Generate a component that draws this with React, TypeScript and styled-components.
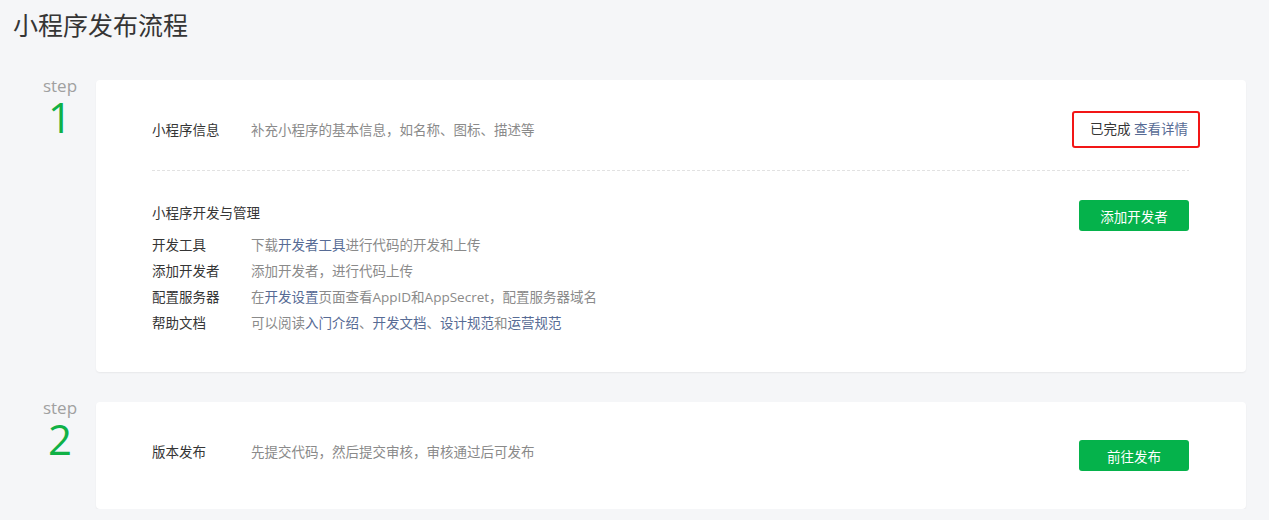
import React from "react";
import styled, { createGlobalStyle } from "styled-components";

const GlobalStyle = createGlobalStyle`
  html, body {
    margin: 0;
    padding: 0;
    background: #f5f6f8;
  }
  body {
    font-family: "Open Sans", "Noto Sans CJK SC", sans-serif;
    color: #353535;
  }
`;

const Page = styled.div`
  padding: 0 23px 0 0;
`;

const Title = styled.h1`
  margin: 8px 0 0 13px;
  font-size: 25px;
  line-height: 34px;
  font-weight: 400;
  color: #353535;
`;

const Steps = styled.div`
  margin-top: 38px;
  display: flex;
  flex-direction: column;
  gap: 30px;
`;

const StepRow = styled.div`
  display: grid;
  grid-template-columns: 96px 1fr;
`;

const StepLabel = styled.div`
  padding-left: 24px;
  margin-top: -4px;
  display: flex;
  flex-direction: column;
  align-items: center;
  gap: 2px;
`;

const StepWord = styled.span`
  font-family: "Open Sans", sans-serif;
  font-size: 17px;
  line-height: 20px;
  color: #a0a0a0;
`;

const StepNum = styled.span`
  font-family: "Open Sans", sans-serif;
  font-size: 42px;
  line-height: 34px;
  padding-top: 2px;
  color: #10b146;
`;

const Card = styled.div`
  background: #fff;
  border-radius: 4px;
  box-shadow: 0 1px 2px rgba(0, 0, 0, 0.06);
  padding: 0 57px 0 56px;
`;

const Section = styled.div<{ $pt: number; $pb: number }>`
  padding-top: ${(p) => p.$pt}px;
  padding-bottom: ${(p) => p.$pb}px;
`;

const Divider = styled.div`
  height: 1px;
  background-image: linear-gradient(to right, #e2e2e2 60%, transparent 60%);
  background-size: 5px 1px;
  background-repeat: repeat-x;
`;

const InfoRow = styled.div<{ $align?: string }>`
  display: flex;
  align-items: ${(p) => p.$align || "center"};
  font-size: 13.5px;
`;

const Label = styled.span`
  width: 99px;
  flex-shrink: 0;
  line-height: 26px;
  color: #353535;
`;

const Desc = styled.span`
  flex: 1;
  line-height: 26px;
  color: #8a8a8a;
`;

const Link = styled.a`
  color: #576b95;
  text-decoration: none;
`;

const Status = styled.span`
  border: 2px solid #f21616;
  border-radius: 3px;
  padding: 7px 10px 7px 16px;
  margin-right: -11px;
  line-height: 19px;
  color: #353535;
`;

const HeadRow = styled.div`
  margin-top: 29px;
  display: flex;
  justify-content: space-between;
  align-items: flex-start;
`;

const SectionTitle = styled.span`
  font-size: 13.5px;
  line-height: 26px;
  color: #353535;
`;

const Button = styled.button`
  width: 110px;
  height: 31px;
  border: 0;
  border-radius: 3px;
  background: #05b24b;
  color: #fff;
  font-family: "Noto Sans CJK SC", sans-serif;
  font-size: 13.5px;
  cursor: pointer;
  padding: 0;
  flex-shrink: 0;
`;

const List = styled.div`
  margin-top: 1px;
  display: flex;
  flex-direction: column;
`;

const TextGroup = styled.div`
  display: flex;
  flex: 1;
  margin-top: -1px;
`;

const rows: { label: string; desc: React.ReactNode }[] = [
  {
    label: "开发工具",
    desc: (
      <>
        下载<Link>开发者工具</Link>进行代码的开发和上传
      </>
    ),
  },
  { label: "添加开发者", desc: "添加开发者，进行代码上传" },
  {
    label: "配置服务器",
    desc: (
      <>
        在<Link>开发设置</Link>页面查看AppID和AppSecret，配置服务器域名
      </>
    ),
  },
  {
    label: "帮助文档",
    desc: (
      <>
        可以阅读<Link>入门介绍</Link>、<Link>开发文档</Link>、<Link>设计规范</Link>和
        <Link>运营规范</Link>
      </>
    ),
  },
];

export default function App() {
  return (
    <>
      <GlobalStyle />
      <Page>
        <Title>小程序发布流程</Title>
        <Steps>
          <StepRow>
            <StepLabel>
              <StepWord>step</StepWord>
              <StepNum>1</StepNum>
            </StepLabel>
            <Card>
              <Section $pt={31} $pb={22}>
                <InfoRow>
                  <Label>小程序信息</Label>
                  <Desc>补充小程序的基本信息，如名称、图标、描述等</Desc>
                  <Status>
                    已完成 <Link>查看详情</Link>
                  </Status>
                </InfoRow>
              </Section>
              <Divider />
              <Section $pt={0} $pb={36}>
                <HeadRow>
                  <SectionTitle>小程序开发与管理</SectionTitle>
                  <Button>添加开发者</Button>
                </HeadRow>
                <List>
                  {rows.map((r) => (
                    <InfoRow key={r.label}>
                      <Label>{r.label}</Label>
                      <Desc>{r.desc}</Desc>
                    </InfoRow>
                  ))}
                </List>
              </Section>
            </Card>
          </StepRow>
          <StepRow>
            <StepLabel>
              <StepWord>step</StepWord>
              <StepNum>2</StepNum>
            </StepLabel>
            <Card>
              <Section $pt={38} $pb={38}>
                <InfoRow $align="flex-start">
                  <TextGroup>
                    <Label>版本发布</Label>
                    <Desc>先提交代码，然后提交审核，审核通过后可发布</Desc>
                  </TextGroup>
                  <Button>前往发布</Button>
                </InfoRow>
              </Section>
            </Card>
          </StepRow>
        </Steps>
      </Page>
    </>
  );
}
